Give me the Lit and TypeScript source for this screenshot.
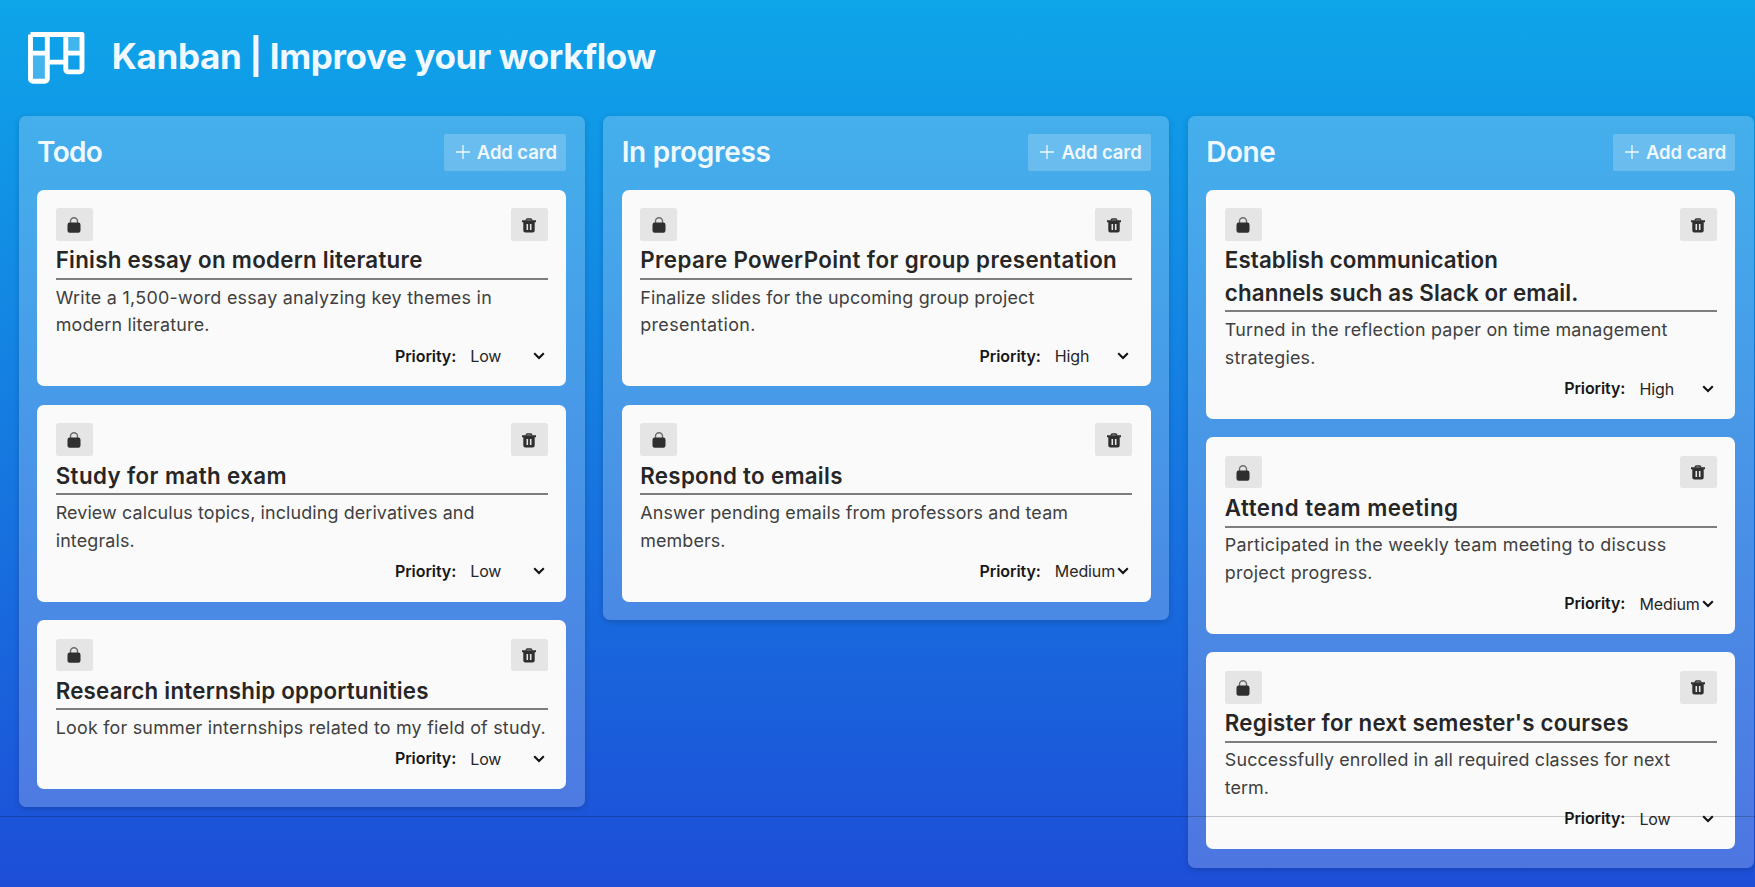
import { LitElement, html, css, svg } from "lit";
import { customElement, property } from "lit/decorators.js";
import { styleMap } from "lit/directives/style-map.js";

// A line of text with its tracking in pixels.
type Line = [text: string, tracking: number];

interface Task {
  title: Line[];
  text: Line[];
  priority: string;
}

interface Column {
  name: Line;
  tasks: Task[];
}

const columns: Column[] = [
  {
    name: ["Todo", -0.7],
    tasks: [
      {
        title: [["Finish essay on modern literature", 0.28]],
        text: [["Write a 1,500-word essay analyzing key themes in", 0.28], ["modern literature.", 0.2]],
        priority: "Low",
      },
      {
        title: [["Study for math exam", 0.42]],
        text: [["Review calculus topics, including derivatives and", 0.12], ["integrals.", 0.15]],
        priority: "Low",
      },
      {
        title: [["Research internship opportunities", 0.24]],
        text: [["Look for summer internships related to my field of study.", 0.22]],
        priority: "Low",
      },
    ],
  },
  {
    name: ["In progress", -0.3],
    tasks: [
      {
        title: [["Prepare PowerPoint for group presentation", 0.4]],
        text: [["Finalize slides for the upcoming group project", 0.17], ["presentation.", 0.35]],
        priority: "High",
      },
      {
        title: [["Respond to emails", 0.31]],
        text: [["Answer pending emails from professors and team", 0.16], ["members.", 0.1]],
        priority: "Medium",
      },
    ],
  },
  {
    name: ["Done", -0.5],
    tasks: [
      {
        title: [["Establish communication", 0.12], ["channels such as Slack or email.", 0.12]],
        text: [["Turned in the reflection paper on time management", 0.18], ["strategies.", 0.2]],
        priority: "High",
      },
      {
        title: [["Attend team meeting", 0.5]],
        text: [["Participated in the weekly team meeting to discuss", 0.25], ["project progress.", 0.23]],
        priority: "Medium",
      },
      {
        title: [["Register for next semester's courses", 0.21]],
        text: [["Successfully enrolled in all required classes for next", 0.12], ["term.", 0]],
        priority: "Low",
      },
    ],
  },
];

const tracked = ([text, tracking]: Line) =>
  html`<span class="line" style=${styleMap({ letterSpacing: `${tracking}px` })}>${text}</span>`;

const logo = svg`<svg width="57" height="52" viewBox="0 0 57 52">
  <path fill="#fff" fill-opacity=".22" d="M3 21h16v28H3zM38 2h16v19H38z"/>
  <path fill="none" stroke="#fff" stroke-width="4.900" stroke-linejoin="round" d="M2.500 2.500h51.500v34.900a2.500 2.500 0 0 1-2.500 2.500H40.300a2.500 2.500 0 0 1-2.500-2.500V2.500M2.500 2.500v44.200a2.500 2.500 0 0 0 2.500 2.500h11.800a2.500 2.500 0 0 0 2.500-2.500V2.500M2.500 21.100h16.800M19.300 30.100h18.500M37.800 21.100H54"/>
</svg>`;

const lock = svg`<svg width="14" height="16" viewBox="0 0 14 16">
  <path fill="none" stroke="#6b6b6b" stroke-width="1.400" d="M3.500 7V4.300a3.500 3.500 0 0 1 7 0V7"/>
  <rect x=".5" y="5.500" width="13" height="10.300" rx="2.200" fill="#2f2f2f"/>
</svg>`;

const bin = svg`<svg width="14" height="15" viewBox="0 0 14 15">
  <path fill="none" stroke="#333" stroke-width="1.500" d="M4.300 2.500V2Q4.300.9 5.400.9h3.200q1.100 0 1.100 1.100v.5"/>
  <path fill="#2f2f2f" fill-rule="evenodd" d="M0 2.200h14v2.100h-1.300V12.500a2 2 0 0 1-2 2H3.300a2 2 0 0 1-2-2V4.300H0zM4.500 6v6h1.600V6zM7.900 6v6h1.600V6z"/>
</svg>`;

const chevron = svg`<svg width="12" height="8" viewBox="0 0 12 8"><path fill="none" stroke="#111" stroke-width="2.100" d="M1.200 1.300 6 6l4.800-4.700"/></svg>`;

const plus = svg`<svg width="14" height="14" viewBox="0 0 14 14"><path fill="none" stroke="#f0f9ff" stroke-width="1.300" d="M7 0v14M0 7h14"/></svg>`;

@customElement("task-card")
class TaskCard extends LitElement {
  @property({ attribute: false }) task!: Task;

  static styles = css`
    :host { display: block; box-sizing: border-box; padding: 18.6px; background: #fafafa; border-radius: 7px; }
    .line { display: block; white-space: nowrap; }
    .tools { display: flex; justify-content: space-between; }
    .tool { width: 37px; height: 31.500px; padding-top: 1px; display: grid; place-items: center; background: #e5e5e5; border-radius: 2.500px; }
    .title { margin: 3.600px 0 3.600px; padding-bottom: 1px; border-bottom: 2px solid #7d7d7d; font-size: 22.300px; line-height: 32.500px; font-weight: 600; color: #262626; }
    .text { margin: 0; font-size: 17.900px; line-height: 27.900px; color: #404040; }
    .priority { display: flex; align-items: center; justify-content: flex-end; height: 27.900px; padding-top: 3px; margin-bottom: -2.400px; font-size: 16px; color: #171717; }
    .label { font-weight: 600; letter-spacing: -0.08px; margin-right: 14px; padding-bottom: 1px; }
    .select { display: flex; align-items: center; justify-content: space-between; width: 74.500px; padding-right: 3px; color: #262626; letter-spacing: -0.1px; }
  `;

  render() {
    return html`
      <div class="tools"><span class="tool">${lock}</span><span class="tool">${bin}</span></div>
      <h2 class="title">${this.task.title.map(tracked)}</h2>
      <p class="text">${this.task.text.map(tracked)}</p>
      <div class="priority"><span class="label">Priority:</span><span class="select"><span>${this.task.priority}</span>${chevron}</span></div>
    `;
  }
}

@customElement("app-root")
class AppRoot extends LitElement {
  static styles = css`
    :host { display: block; position: relative; height: 887px; overflow: hidden; font-family: Inter, "Noto Sans", sans-serif; background: linear-gradient(#0ea5e9, #1d4ed8); }
    .header { display: flex; align-items: center; height: 116px; box-sizing: border-box; padding: 0 0 0 27.500px; gap: 27.300px; color: #f0f9ff; }
    .name { margin: 0; padding-bottom: 5px; font-size: 35px; font-weight: 700; letter-spacing: -0.37px; white-space: nowrap; }
    .board { display: grid; grid-template-columns: repeat(3, 566px); gap: 18.600px; padding-left: 18.700px; align-items: start; }
    .column { display: flex; flex-direction: column; gap: 18.400px; padding: 18.400px; background: rgba(255, 255, 255, 0.22); border-radius: 7px; box-shadow: 0 2px 6px rgba(0, 0, 0, 0.16); }
    .bar { display: flex; align-items: center; justify-content: space-between; height: 37px; color: #f0f9ff; }
    .heading { margin: 0; font-size: 28px; line-height: 37px; font-weight: 600; }
    .line { display: block; white-space: nowrap; }
    .add { display: flex; align-items: center; gap: 7px; height: 37px; width: 122.500px; box-sizing: border-box; padding: 0 9px 2px 12px; background: rgba(255, 255, 255, 0.2); border-radius: 2px; font-size: 18.500px; font-weight: 600; letter-spacing: -0.1px; white-space: nowrap; }
    .rule { position: absolute; left: 0; right: 0; top: 816px; height: 1px; background: rgba(0, 0, 0, 0.2); }
  `;

  render() {
    return html`
      <header class="header">${logo}<h1 class="name">Kanban | Improve your workflow</h1></header>
      <main class="board">
        ${columns.map((c) => html`
          <section class="column">
            <div class="bar"><h2 class="heading">${tracked(c.name)}</h2><span class="add">${plus}<span>Add card</span></span></div>
            ${c.tasks.map((t) => html`<task-card .task=${t}></task-card>`)}
          </section>`)}
      </main>
      <div class="rule"></div>
    `;
  }
}
